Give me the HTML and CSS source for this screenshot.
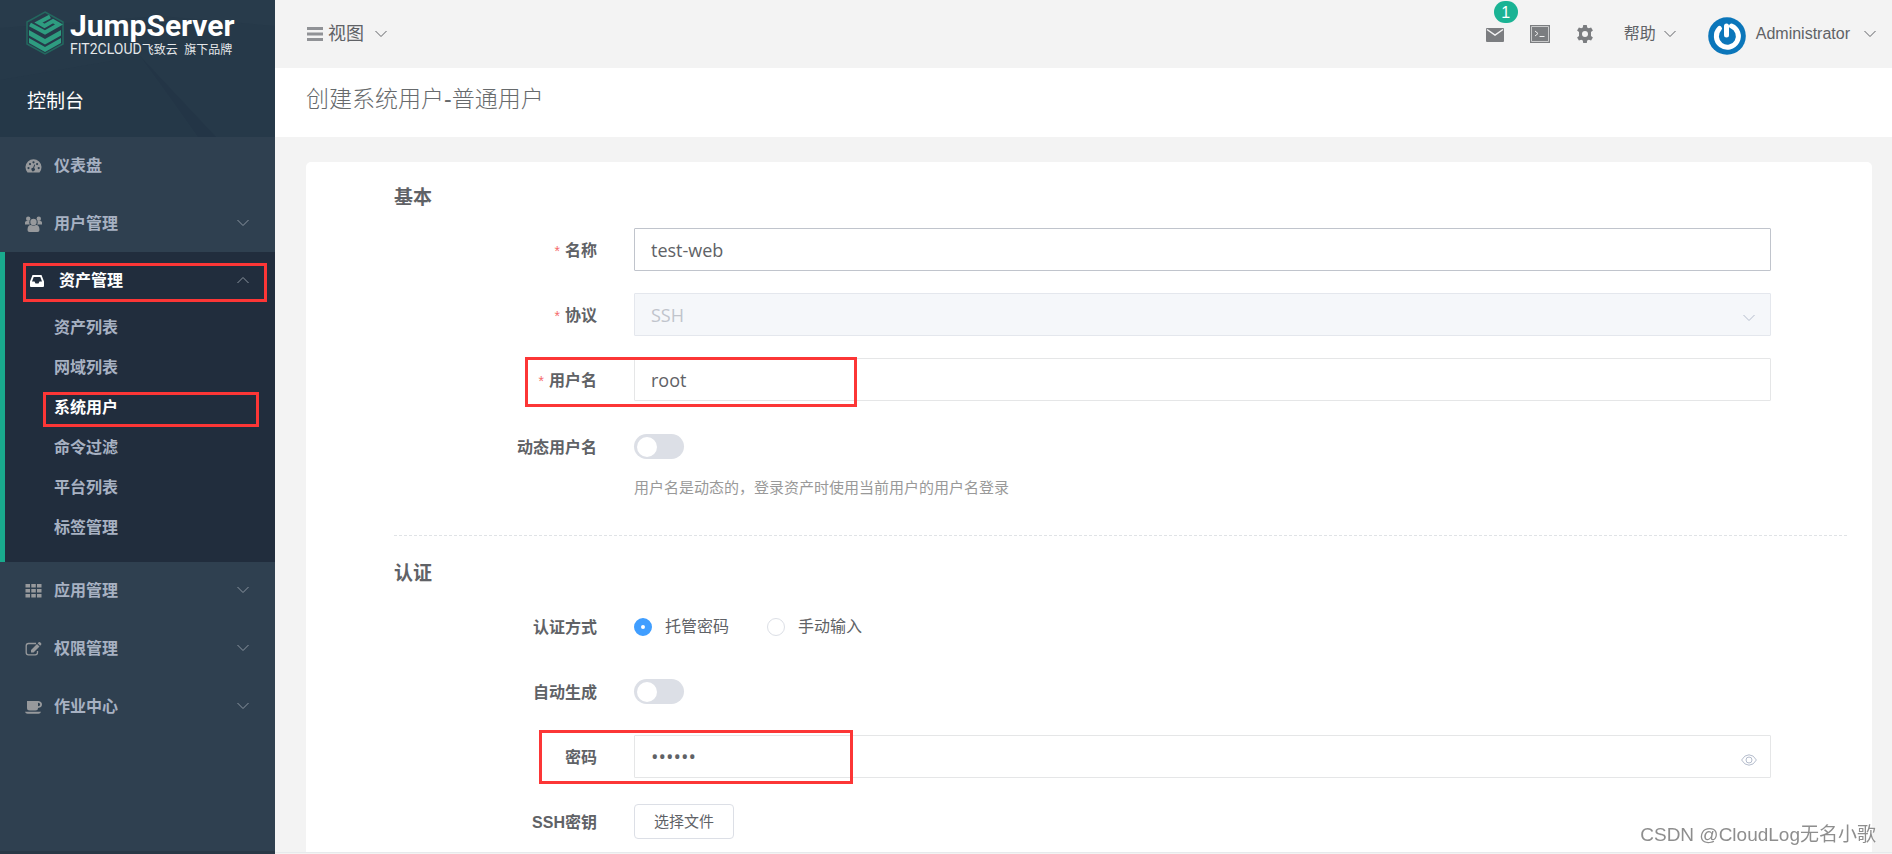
FILE: index.html
```html
<!DOCTYPE html>
<html lang="zh-CN">
<head>
<meta charset="utf-8">
<title>JumpServer</title>
<link rel="stylesheet" href="styles.css">
</head>
<body>
<svg class="defs" aria-hidden="true">
  <symbol id="down" viewBox="0 0 12 8"><path d="M.5 1 6 6.500 11.500 1" fill="none" stroke="currentColor"/></symbol>
  <symbol id="up" viewBox="0 0 12 8"><path d="M.5 7 6 1.500 11.500 7" fill="none" stroke="currentColor"/></symbol>
</svg>
<div class="app">
  <aside class="sidebar">
    <header class="brand">
      <svg class="brand-bg" viewBox="0 0 275 137" preserveAspectRatio="none" aria-hidden="true">
        <path d="M0 0H275V137H0z" fill="#263949"/>
        <path d="M0 28 160 16 275 26V0H0z" fill="#283b4b"/>
        <path d="M140 56 216 137H198Q165 90 140 56z" fill="#233546"/>
        <path d="M140 56 198 137H0V80z" fill="#253848"/>
      </svg>
      <a class="logo" href="#">
        <svg class="logo-mark" viewBox="0 0 38 44" aria-hidden="true">
          <path d="M19 1 37 11V33L19 43 1 33V11z" fill="none" stroke="#23685f" stroke-width="1.500"/>
          <path d="M4 13.500 19 21.500 33 13.500 27 10 18.500 15 12.500 11.500 24 5.500" fill="none" stroke="#2e9c80" stroke-width="4"/>
          <path d="M3 19v5.500l16 9 16-9V19l-16 9zM3 27v5l16 9 16-9v-5l-16 9z" fill="#2e9c80"/>
        </svg>
        <span class="logo-text">
          <span class="logo-name">JumpServer</span>
          <span class="logo-sub"><span>FIT2CLOUD</span>飞致云&nbsp; 旗下品牌</span>
        </span>
      </a>
      <div class="console">控制台</div>
    </header>
    <nav class="menu">
      <a class="item" href="#"><svg class="ico" viewBox="0 0 16 16"><path fill-rule="evenodd" d="M2 14.500A8 8 0 1 1 14 14.500zM3 9a1.100 1.100 0 1 0 .01 2.200A1.100 1.100 0 0 0 3 9zM4.500 5a1.100 1.100 0 1 0 .01 2.200A1.100 1.100 0 0 0 4.500 5zM8 3.200a1.100 1.100 0 1 0 .01 2.200A1.100 1.100 0 0 0 8 3.200zM11.600 5a1.100 1.100 0 1 0 .01 2.200A1.100 1.100 0 0 0 11.600 5zM13.200 9a1.100 1.100 0 1 0 .01 2.200A1.100 1.100 0 0 0 13.200 9zM8.800 6.500 7.600 9.800a1.700 1.700 0 1 0 1 .3l1.100-3.400z"/></svg><span>仪表盘</span></a>
      <a class="item" href="#"><svg class="ico" viewBox="0 0 17 16"><circle cx="3.200" cy="2.800" r="2.200"/><circle cx="13.800" cy="2.800" r="2.200"/><path d="M0 8.500V6.500Q0 5 1.500 5h3Q3.800 7 5 8.500zM17 8.500V6.500Q17 5 15.500 5h-3q.7 2-.5 3.500z"/><circle cx="8.500" cy="6" r="3.200"/><path d="M2.500 14q0-5 3.500-5 2.500 1.500 5 0 3.500 0 3.500 5 0 2-2 2h-8q-2 0-2-2z"/></svg><span>用户管理</span><svg class="arrow"><use href="#down"/></svg></a>
      <div class="group">
        <a class="item active" href="#"><svg class="ico small" viewBox="0 0 14 14"><path fill-rule="evenodd" d="M2.500 1h9L14 7.500V12q0 1-1 1H1q-1 0-1-1V7.500zM3.700 3 2 7.500h2.500L5.500 9.500h3l1-2H12L10.300 3z"/></svg><span>资产管理</span><svg class="arrow"><use href="#up"/></svg></a>
        <div class="mark mark-group"></div>
        <div class="sub">
          <a href="#">资产列表</a>
          <a href="#">网域列表</a>
          <a class="current" href="#">系统用户<i class="mark mark-current"></i></a>
          <a href="#">命令过滤</a>
          <a href="#">平台列表</a>
          <a href="#">标签管理</a>
        </div>
      </div>
      <a class="item" href="#"><svg class="ico" viewBox="0 0 16 16"><path d="M0 1h4.500v3.500H0zM5.800 1h4.500v3.500H5.800zM11.500 1H16v3.500h-4.500zM0 6h4.500v3.500H0zM5.800 6h4.500v3.500H5.800zM11.500 6H16v3.500h-4.500zM0 11h4.500v3.500H0zM5.800 11h4.500v3.500H5.800zM11.500 11H16v3.500h-4.500z"/></svg><span>应用管理</span><svg class="arrow"><use href="#down"/></svg></a>
      <a class="item" href="#"><svg class="ico" viewBox="0 0 16 16"><path d="M10.500 2.500H3Q.7 2.500.7 4.800v6.700q0 2.300 2.300 2.300h6.700q2.300 0 2.300-2.300V10" fill="none" stroke="currentColor" stroke-width="1.300"/><path d="M5.500 11.500V9l6-6L14 5.500l-6 6zM12.200 2.300l1-1q.7-.7 1.400 0l1 1q.7.700 0 1.400l-1 1z"/></svg><span>权限管理</span><svg class="arrow"><use href="#down"/></svg></a>
      <a class="item" href="#"><svg class="ico" viewBox="0 0 17 16"><path fill-rule="evenodd" d="M2 2h11.500q3.500.5 3.500 3.500T13 9q0 2.500-2.500 2.500h-6Q2 11.500 2 9zM13 3.700v3.600q2.200 0 2.200-1.800T13 3.700zM0 12.800h16q-.5 2-2.500 2h-11q-2 0-2.500-2z"/></svg><span>作业中心</span><svg class="arrow"><use href="#down"/></svg></a>
    </nav>
  </aside>

  <main class="main">
    <header class="topbar">
      <button class="view" type="button"><svg class="bars" viewBox="0 0 16 14"><path d="M0 0h16v3H0zM0 5.500h16v3H0zM0 11h16v3H0z" fill="#909296"/></svg><span>视图</span><svg class="chev"><use href="#down"/></svg></button>
      <div class="tools">
        <a class="tool mail" href="#" aria-label="消息"><svg width="18" height="16" viewBox="0 0 18 16"><rect y="2" width="18" height="14" rx="1" fill="#7b7d80"/><path d="m1 3.500 8 5.500 8-5.500" fill="none" stroke="#f3f3f3" stroke-width="1.500"/></svg><span class="badge">1</span></a>
        <a class="tool" href="#" aria-label="终端"><svg width="20" height="18" viewBox="0 0 20 18"><path d="M0 0h20v18H0z" fill="#7b7d80"/><path d="M1.500 1.500h17v15h-17z" fill="none" stroke="#c9cacb"/><path d="m5 6 3 2.500L5 11M9.500 11.500h5" fill="none" stroke="#eee"/></svg></a>
        <a class="tool" href="#" aria-label="设置"><svg width="18" height="18" viewBox="0 0 18 18"><path fill-rule="evenodd" fill="#7b7d80" d="M7.200 0h3.600l.4 2.400 1.600.9 2.300-.9 1.800 3-1.900 1.600v4l1.900 1.600-1.800 3-2.300-.9-1.600.9-.4 2.400H7.200l-.4-2.400-1.600-.9-2.300.9-1.800-3L3 11V7L1.100 5.400l1.800-3 2.300.9 1.600-.9zM9 6a3 3 0 1 0 .01 6A3 3 0 0 0 9 6z"/></svg></a>
        <button class="help" type="button">帮助<svg class="chev"><use href="#down"/></svg></button>
        <button class="user" type="button">
          <svg width="38" height="38" viewBox="0 0 38 38"><circle cx="19" cy="19" r="18.800" fill="#0b76ba"/><path d="M11.500 11.500a11 11 0 1 0 12-2.500" fill="none" stroke="#fff" stroke-width="5" stroke-linecap="round"/><path d="M18.500 9v9" stroke="#fff" stroke-width="5" stroke-linecap="round"/></svg>
          <span>Administrator</span><svg class="chev"><use href="#down"/></svg>
        </button>
      </div>
    </header>
    <div class="heading"><h1>创建系统用户-普通用户</h1></div>
    <div class="content">
      <form class="card">
        <section>
          <h2>基本</h2>
          <div class="row"><label class="req" for="name">名称</label><div class="field"><input class="text hover" id="name" type="text" value="test-web"></div></div>
          <div class="row"><label class="req" for="proto">协议</label><div class="field"><select class="text" id="proto" disabled><option>SSH</option></select><svg class="chev suffix"><use href="#down"/></svg></div></div>
          <div class="row"><label class="req" for="user">用户名</label><div class="field"><input class="text" id="user" type="text" value="root"></div><div class="mark mark-user"></div></div>
          <div class="row switch-row"><label for="dyn">动态用户名</label><div class="field"><input class="switch" id="dyn" type="checkbox"></div></div>
          <p class="hint">用户名是动态的，登录资产时使用当前用户的用户名登录</p>
        </section>
        <section class="auth">
          <h2>认证</h2>
          <div class="row" role="radiogroup" aria-labelledby="mode"><span class="label" id="mode">认证方式</span><div class="field radios"><label><input type="radio" name="mode" checked>托管密码</label><label><input type="radio" name="mode">手动输入</label></div></div>
          <div class="row"><label for="auto">自动生成</label><div class="field"><input class="switch" id="auto" type="checkbox"></div></div>
          <div class="row"><label for="pass">密码</label><div class="field"><input class="text password" id="pass" type="password" value="123456"><svg class="eye suffix" viewBox="0 0 16 12"><path d="M.6 6Q3.500.8 8 .8T15.400 6Q12.500 11.200 8 11.200T.6 6z" fill="none" stroke="currentColor"/><circle cx="8" cy="6" r="3" fill="none" stroke="currentColor"/></svg></div><div class="mark mark-pass"></div></div>
          <div class="row"><label for="key">SSH密钥</label><div class="field"><button class="file" id="key" type="button">选择文件</button></div></div>
        </section>
      </form>
    </div>
    <footer class="footer"></footer>
  </main>
  <div class="watermark">CSDN @CloudLog无名小歌</div>
</div>
</body>
</html>
```
FILE: styles.css
```css
* { box-sizing: border-box; }
body {
  margin: 0;
  font: 16px/24px "Liberation Sans", "Noto Sans CJK SC", sans-serif;
  color: #606266;
}
a { color: inherit; text-decoration: none; }
button { font: inherit; color: inherit; border: 0; background: none; padding: 0; cursor: pointer; }
.defs { display: none; }
.app { display: flex; height: 100vh; overflow: hidden; background: #f3f3f3; }

/* sidebar */
.sidebar { flex: 0 0 275px; background: #2f4050; border-bottom: 3px solid #293846; color: #a7b1c2; }
.brand { position: relative; height: 137px; padding: 11px 0 0 26px; color: #fff; }
.brand-bg { position: absolute; inset: 0; width: 100%; height: 100%; }
.logo, .console { position: relative; }
.logo { display: flex; gap: 6px; }
.logo-mark { width: 38px; height: 44px; }
.logo-text { display: flex; flex-direction: column; }
.logo-name { font: bold 30px/29px Roboto, sans-serif; }
.logo-sub { font-size: 12px; line-height: 18px; color: #e4e7ea; white-space: nowrap; }
.logo-sub span { font: 14px/18px Roboto, sans-serif; }
.console { margin-top: 28px; padding-left: 1px; font-size: 19px; line-height: 30px; }
.item { display: flex; align-items: center; height: 57px; padding: 0 26px 0 25px; font-weight: bold; }
.item + .item { margin-top: 1px; }
.item span { flex: 1; padding-top: 1px; }
.ico { width: 17px; height: 16px; margin-right: 12px; fill: #97999c; color: #97999c; }
.ico.small { width: 14px; margin-right: 15px; fill: #fff; }
.arrow { width: 12px; height: 8px; margin-bottom: 2px; color: #8b949f; }
.group { position: relative; border-left: 5px solid #19aa8d; background: #212d3d; padding-bottom: 17px; }
.active, .sub .current { color: #fff; }
.sub { display: flex; flex-direction: column; gap: 4px; }
.sub a { position: relative; height: 36px; padding-left: 49px; line-height: 38px; font-weight: bold; }
.mark { position: absolute; border: 3px solid #fc3636; pointer-events: none; }
.mark-group { left: 18px; right: 8px; top: 11px; height: 39px; }
.mark-current { left: 38px; right: 16px; top: 3px; height: 35px; }

/* top bar */
.main { flex: 1; min-width: 0; display: flex; flex-direction: column; }
.topbar { flex: none; display: flex; justify-content: space-between; height: 68px; padding: 0 16px 0 32px; }
.chev { width: 12px; height: 8px; }
.view { display: flex; align-items: center; font-size: 18px; }
.bars { width: 16px; height: 14px; margin-right: 5px; }
.view .chev { margin-left: 11px; }
.tools { display: flex; align-items: center; gap: 26px; }
.tool { position: relative; display: flex; }
.badge { position: absolute; left: 8px; bottom: 19px; width: 24px; height: 22px; border-radius: 11px; background: #1ab394; color: #fff; font-size: 16px; line-height: 23px; text-align: center; }
.help, .user { display: flex; align-items: center; }
.help { margin-left: 4px; gap: 8px; }
.user { margin-left: 6px; gap: 10px; }
.user > svg:first-child { margin-top: 4px; }
.user .chev { margin-left: 4px; }
.heading { flex: none; height: 69px; padding: 0 31px; background: #fff; }
.heading h1 { margin: 0; font-size: 23px; line-height: 62px; font-weight: 300; color: #676a6c; }

/* form */
.content { flex: 1; min-height: 0; overflow: hidden; padding: 25px 20px 0 31px; }
.card { min-height: 100%; padding: 20px 25px 24px 88px; border-radius: 5px; background: #fff; }
h2 { margin: 0 0 16px; padding-top: 1px; font-size: 19px; line-height: 29px; color: #606266; }
.row { position: relative; display: flex; align-items: center; gap: 37px; height: 43px; margin: 0 76px 22px 0; }
.row > label, .label { flex: 0 0 203px; padding-top: 2px; text-align: right; font-weight: bold; }
.req::before { content: "*"; margin-right: 5px; color: #f56c6c; font-weight: normal; font-size: 14px; }
.field { position: relative; flex: 1; display: flex; align-items: center; }
.text { appearance: none; width: 100%; height: 43px; padding: 0 16px; border: 1px solid #e5e6e7; border-radius: 1px; background: #fff; color: #606266; font: 18px/24px "Open Sans", sans-serif; outline: 0; }
.text.hover { border-color: #c0c4cc; }
.text:disabled { background: #f5f7fa; border-color: #e4e7ed; color: #c0c4cc; opacity: 1; }
.text.password { font-size: 20px; }
.suffix { position: absolute; right: 14px; top: 19px; color: #b4bccc; }
.chev.suffix { right: 16px; top: 21px; }
.eye { width: 16px; height: 12px; }
.switch { appearance: none; width: 50px; height: 25px; margin: 0; padding: 3px; border-radius: 13px; background: #dcdfe6; }
.switch::before { content: ""; display: block; width: 20px; height: 20px; border-radius: 50%; background: #fff; }
.switch-row { margin-top: 24px; margin-bottom: 8px; }
.hint { margin: 0 0 35px 240px; font-size: 15px; line-height: 24px; color: #999; }
.auth { border-top: 1px dashed #e0e3e6; padding-top: 22px; }
.radios { gap: 38px; }
.radios label { display: flex; align-items: center; gap: 13px; }
.radios input { appearance: none; width: 18px; height: 18px; margin: 0; border: 1px solid #dcdfe6; border-radius: 50%; background: #fff; }
.radios input:checked { border: 7px solid #409eff; }
.auth h2 { margin-bottom: 17px; }
.file { width: 100px; height: 35px; border: 1px solid #dcdfe6; border-radius: 4px; font-size: 15px; line-height: 33px; }
.mark-user { left: 131px; width: 332px; top: -1px; height: 50px; }
.mark-pass { left: 145px; width: 314px; top: -5px; height: 54px; }
.footer { flex: none; height: 2px; border-top: 1px solid #e7eaec; }
.watermark { position: fixed; right: 16px; bottom: 6px; font: 19px/26px "Liberation Sans", "Noto Sans CJK SC", sans-serif; color: #8e8e8e; text-shadow: -1px -1px 0 #fff; }
```
